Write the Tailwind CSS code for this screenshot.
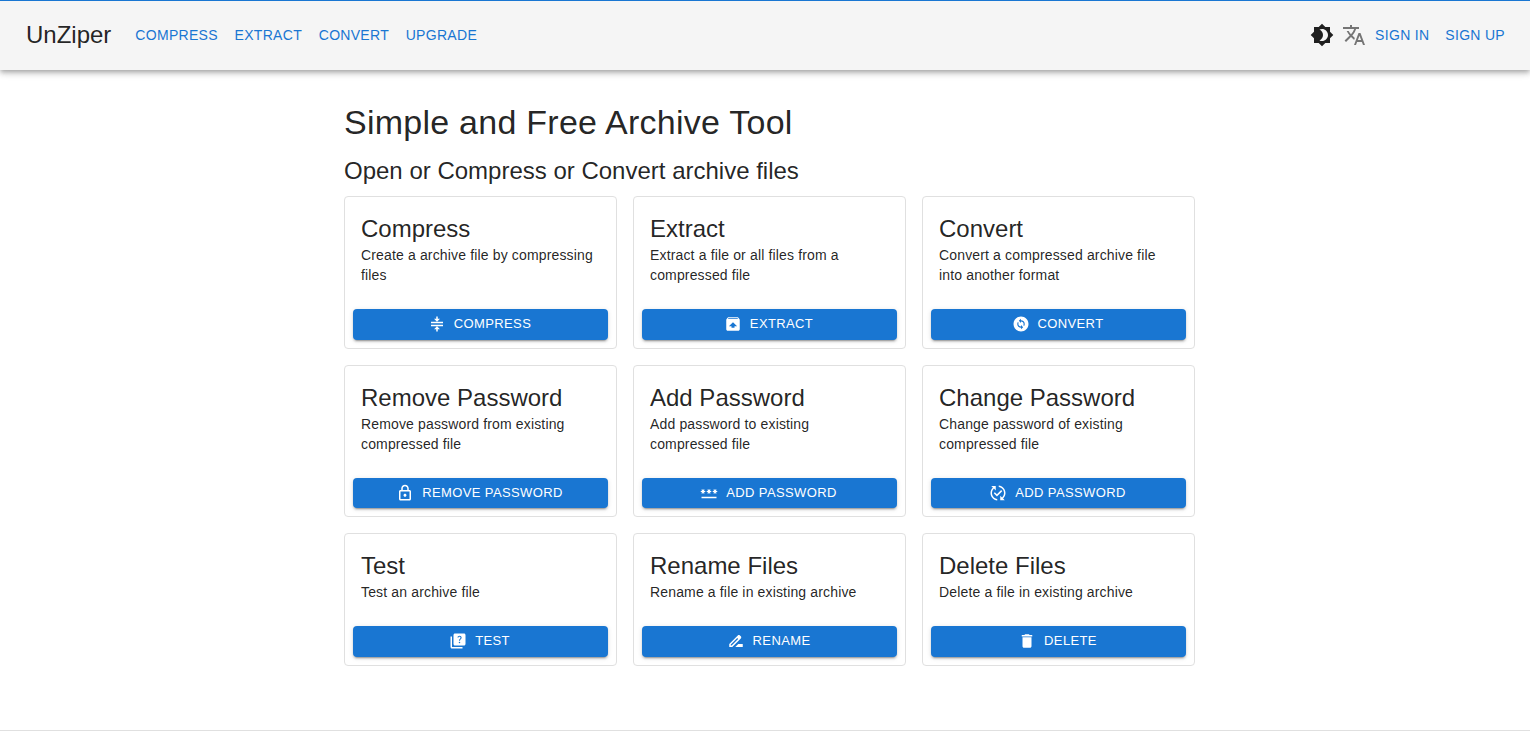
<!DOCTYPE html>
<html lang="en">
<head>
<meta charset="utf-8">
<title>UnZiper</title>
<script src="https://cdn.jsdelivr.net/npm/@tailwindcss/browser@4"></script>
</head>
<body class="h-screen overflow-hidden bg-white font-['Liberation_Sans',Arial,sans-serif] text-black/87 flex flex-col">
<header class="h-[69px] shrink-0 box-content bg-[#f5f5f5] border-t border-[#1976d2] shadow-[0_2px_4px_-1px_rgba(0,0,0,0.2),0_4px_5px_0_rgba(0,0,0,0.14),0_1px_10px_0_rgba(0,0,0,0.12)] flex items-center pl-[26px] pr-[25px] pb-0 relative z-10">
  <div class="flex items-center w-full h-full pb-[2px]">
  <div class="text-2xl leading-8 mr-4">UnZiper</div>
  <nav class="flex items-center gap-[0.7px] text-sm tracking-[0.3px] text-[#1976d2] leading-[26px]">
    <a class="px-2 py-1.5">COMPRESS</a>
    <a class="px-2 py-1.5">EXTRACT</a>
    <a class="px-2 py-1.5">CONVERT</a>
    <a class="px-2 py-1.5">UPGRADE</a>
  </nav>
  <div class="ml-auto flex items-center text-sm tracking-[0.3px] text-[#1976d2] leading-[26px]">
    <svg class="w-6 h-6 fill-[#1f1f1f]" viewBox="0 0 24 24"><path d="M20 8.69V4h-4.69L12 .69 8.69 4H4v4.69L.69 12 4 15.31V20h4.69L12 23.31 15.31 20H20v-4.69L23.31 12 20 8.69zM12 18c-.89 0-1.74-.2-2.5-.55C11.56 16.5 13 14.42 13 12s-1.44-4.5-3.5-5.45C10.26 6.2 11.11 6 12 6c3.31 0 6 2.69 6 6s-2.69 6-6 6z"/></svg>
    <svg class="w-6 h-6 ml-2 fill-[#757575]" viewBox="0 0 24 24"><path d="M12.87 15.07l-2.54-2.51.03-.03c1.74-1.94 2.98-4.17 3.71-6.53H17V4h-7V2H8v2H1v1.99h11.17C11.5 7.92 10.44 9.75 9 11.35 8.07 10.32 7.3 9.19 6.69 8h-2c.73 1.63 1.73 3.17 2.98 4.56l-5.09 5.02L4 19l5-5 3.11 3.11.76-2.04zM18.5 10h-2L12 22h2l1.12-3h4.75L21 22h2l-4.5-12zm-2.62 7l1.62-4.33L19.12 17h-3.24z"/></svg>
    <a class="ml-[9px]">SIGN IN</a>
    <a class="ml-4">SIGN UP</a>
  </div>
  </div>
</header>
<main class="flex-1 w-[851px] ml-[344px] pt-[31px]">
  <h1 class="text-[34px] leading-[42px] tracking-[0.25px]">Simple and Free Archive Tool</h1>
  <h2 class="text-2xl leading-8 mt-3 mb-[9px]">Open or Compress or Convert archive files</h2>
  <div class="grid grid-cols-3 gap-4">

    <section class="border border-[#e0e0e0] rounded flex flex-col">
      <div class="p-4 flex-1"><h3 class="text-2xl leading-8">Compress</h3><p class="text-sm leading-5 tracking-[0.15px]">Create a archive file by compressing files</p></div>
      <div class="p-2"><button class="w-full h-[30.5px] rounded bg-[#1976d2] text-white text-[13px] tracking-[0.37px] flex items-center justify-center shadow-[0_3px_1px_-2px_rgba(0,0,0,0.2),0_2px_2px_0_rgba(0,0,0,0.14),0_1px_5px_0_rgba(0,0,0,0.12)]"><svg class="w-[18px] h-[18px] mr-2 -ml-0.5 fill-white" viewBox="0 0 24 24"><path d="M4 9h16v2H4zM4 13h16v2H4zM13 2v3h3l-4 4-4-4h3V2zM11 22v-3H8l4-4 4 4h-3v3z"/></svg><span class="pb-[2px]">COMPRESS</span></button></div>
    </section>

    <section class="border border-[#e0e0e0] rounded flex flex-col">
      <div class="p-4 flex-1"><h3 class="text-2xl leading-8">Extract</h3><p class="text-sm leading-5 tracking-[0.15px]">Extract a file or all files from a compressed file</p></div>
      <div class="p-2"><button class="w-full h-[30.5px] rounded bg-[#1976d2] text-white text-[13px] tracking-[0.37px] flex items-center justify-center shadow-[0_3px_1px_-2px_rgba(0,0,0,0.2),0_2px_2px_0_rgba(0,0,0,0.14),0_1px_5px_0_rgba(0,0,0,0.12)]"><svg class="w-[18px] h-[18px] mr-2 -ml-0.5 fill-white" viewBox="0 0 24 24"><path d="M20.55 5.22l-1.39-1.68C18.88 3.21 18.47 3 18 3H6c-.47 0-.88.21-1.15.55L3.46 5.22C3.17 5.57 3 6.01 3 6.5V19c0 1.1.89 2 2 2h14c1.1 0 2-.9 2-2V6.5c0-.49-.17-.93-.45-1.28zM12 9.5l5.5 5.5H14v2h-4v-2H6.5L12 9.5zM5.12 5l.82-1h12l.93 1H5.12z"/></svg><span class="pb-[2px]">EXTRACT</span></button></div>
    </section>

    <section class="border border-[#e0e0e0] rounded flex flex-col">
      <div class="p-4 flex-1"><h3 class="text-2xl leading-8">Convert</h3><p class="text-sm leading-5 tracking-[0.15px]">Convert a compressed archive file into another format</p></div>
      <div class="p-2"><button class="w-full h-[30.5px] rounded bg-[#1976d2] text-white text-[13px] tracking-[0.37px] flex items-center justify-center shadow-[0_3px_1px_-2px_rgba(0,0,0,0.2),0_2px_2px_0_rgba(0,0,0,0.14),0_1px_5px_0_rgba(0,0,0,0.12)]"><svg class="w-[18px] h-[18px] mr-2 -ml-0.5 fill-white" viewBox="0 0 24 24"><path d="M12 2C6.48 2 2 6.48 2 12c0 5.52 4.48 10 10 10s10-4.48 10-10C22 6.48 17.52 2 12 2zm.06 17v-2.01H12c-1.28 0-2.56-.49-3.54-1.46-1.71-1.71-1.92-4.35-.64-6.29l1.1 1.1c-.71 1.33-.53 3.01.59 4.13.7.7 1.62 1.03 2.54 1.01v-2.14l2.83 2.83L12.06 19zm4.11-4.24l-1.1-1.1c.71-1.33.53-3.01-.59-4.13C13.79 8.84 12.9 8.5 12 8.5h-.06v2.15L9.11 7.83 11.94 5v2.02c1.3-.02 2.61.45 3.6 1.45 1.7 1.71 1.91 4.34.63 6.29z"/></svg><span class="pb-[2px]">CONVERT</span></button></div>
    </section>

    <section class="border border-[#e0e0e0] rounded flex flex-col">
      <div class="p-4 flex-1"><h3 class="text-2xl leading-8">Remove Password</h3><p class="text-sm leading-5 tracking-[0.15px]">Remove password from existing compressed file</p></div>
      <div class="p-2"><button class="w-full h-[30.5px] rounded bg-[#1976d2] text-white text-[13px] tracking-[0.37px] flex items-center justify-center shadow-[0_3px_1px_-2px_rgba(0,0,0,0.2),0_2px_2px_0_rgba(0,0,0,0.14),0_1px_5px_0_rgba(0,0,0,0.12)]"><svg class="w-[18px] h-[18px] mr-2 -ml-0.5 fill-white" viewBox="0 0 24 24"><path d="M18 8h-1V6c0-2.76-2.24-5-5-5S7 3.24 7 6v2H6c-1.1 0-2 .9-2 2v10c0 1.1.9 2 2 2h12c1.1 0 2-.9 2-2V10c0-1.1-.9-2-2-2zM9 6c0-1.66 1.34-3 3-3s3 1.34 3 3v2H9V6zm9 14H6V10h12v10zm-6-3c1.1 0 2-.9 2-2s-.9-2-2-2-2 .9-2 2 .9 2 2 2z"/></svg><span class="pb-[1px]">REMOVE PASSWORD</span></button></div>
    </section>

    <section class="border border-[#e0e0e0] rounded flex flex-col">
      <div class="p-4 flex-1"><h3 class="text-2xl leading-8">Add Password</h3><p class="text-sm leading-5 tracking-[0.15px]">Add password to existing compressed file</p></div>
      <div class="p-2"><button class="w-full h-[30.5px] rounded bg-[#1976d2] text-white text-[13px] tracking-[0.37px] flex items-center justify-center shadow-[0_3px_1px_-2px_rgba(0,0,0,0.2),0_2px_2px_0_rgba(0,0,0,0.14),0_1px_5px_0_rgba(0,0,0,0.12)]"><svg class="w-[18px] h-[18px] mr-2 -ml-0.5 fill-white" viewBox="0 0 24 24"><path d="M2 17h20v2H2v-2zm1.15-4.05L4 11.47l.85 1.48 1.3-.75-.85-1.48H7v-1.5H5.3l.85-1.47L4.85 7 4 8.47 3.15 7l-1.3.75.85 1.47H1v1.5h1.7l-.85 1.48 1.3.75zm6.7-.75l1.3.75.85-1.48.85 1.48 1.3-.75-.85-1.48H15v-1.5h-1.7l.85-1.47-1.3-.75L12 8.47 11.15 7l-1.3.75.85 1.47H9v1.5h1.7l-.85 1.48zM23 9.22h-1.7l.85-1.47-1.3-.75L20 8.47 19.15 7l-1.3.75.85 1.47H17v1.5h1.7l-.85 1.48 1.3.75.85-1.48.85 1.48 1.3-.75-.85-1.48H23v-1.5z"/></svg><span class="pb-[1px]">ADD PASSWORD</span></button></div>
    </section>

    <section class="border border-[#e0e0e0] rounded flex flex-col">
      <div class="p-4 flex-1"><h3 class="text-2xl leading-8">Change Password</h3><p class="text-sm leading-5 tracking-[0.15px]">Change password of existing compressed file</p></div>
      <div class="p-2"><button class="w-full h-[30.5px] rounded bg-[#1976d2] text-white text-[13px] tracking-[0.37px] flex items-center justify-center shadow-[0_3px_1px_-2px_rgba(0,0,0,0.2),0_2px_2px_0_rgba(0,0,0,0.14),0_1px_5px_0_rgba(0,0,0,0.12)]"><svg class="w-[18px] h-[18px] mr-2 -ml-0.5 fill-white" viewBox="0 0 24 24"><path d="M17.66 9.53l-7.07 7.07-4.24-4.24 1.41-1.41 2.83 2.83 5.66-5.66 1.41 1.41zM4 12c0-2.33 1.02-4.42 2.62-5.88L9 8.5v-6H3l2.2 2.2C3.24 6.52 2 9.11 2 12c0 5.19 3.95 9.45 9 9.95v-2.02c-3.94-.49-7-3.86-7-7.93zm18 0c0-5.19-3.95-9.45-9-9.95v2.02c3.94.49 7 3.86 7 7.93 0 2.33-1.02 4.42-2.62 5.88L15 15.5v6h6l-2.2-2.2c1.96-1.82 3.2-4.41 3.2-7.3z"/></svg><span class="pb-[1px]">ADD PASSWORD</span></button></div>
    </section>

    <section class="border border-[#e0e0e0] rounded flex flex-col">
      <div class="p-4 flex-1"><h3 class="text-2xl leading-8">Test</h3><p class="text-sm leading-5 tracking-[0.15px]">Test an archive file</p></div>
      <div class="p-2"><button class="w-full h-[30.5px] rounded bg-[#1976d2] text-white text-[13px] tracking-[0.37px] flex items-center justify-center shadow-[0_3px_1px_-2px_rgba(0,0,0,0.2),0_2px_2px_0_rgba(0,0,0,0.14),0_1px_5px_0_rgba(0,0,0,0.12)]"><svg class="w-[18px] h-[18px] mr-2 -ml-0.5 fill-white" viewBox="0 0 24 24"><path d="M4 6H2v14c0 1.1.9 2 2 2h14v-2H4V6zm16-4H8c-1.1 0-2 .9-2 2v12c0 1.1.9 2 2 2h12c1.1 0 2-.9 2-2V4c0-1.1-.9-2-2-2zm-5.99 13c-.59 0-1.05-.47-1.05-1.05 0-.59.47-1.04 1.05-1.04.59 0 1.04.45 1.04 1.04-.01.58-.45 1.05-1.04 1.05zm2.5-6.17c-.63.93-1.23 1.21-1.56 1.81-.13.24-.18.4-.18 1.18h-1.52c0-.41-.06-1.08.26-1.65.41-.73 1.18-1.16 1.63-1.8.48-.68.21-1.94-1.14-1.94-.88 0-1.32.67-1.5 1.23l-1.37-.57C11.51 5.96 12.52 5 13.99 5c1.23 0 2.08.56 2.51 1.26.37.61.58 1.73.01 2.57z"/></svg><span class="pb-[2px]">TEST</span></button></div>
    </section>

    <section class="border border-[#e0e0e0] rounded flex flex-col">
      <div class="p-4 flex-1"><h3 class="text-2xl leading-8">Rename Files</h3><p class="text-sm leading-5 tracking-[0.15px]">Rename a file in existing archive</p></div>
      <div class="p-2"><button class="w-full h-[30.5px] rounded bg-[#1976d2] text-white text-[13px] tracking-[0.37px] flex items-center justify-center shadow-[0_3px_1px_-2px_rgba(0,0,0,0.2),0_2px_2px_0_rgba(0,0,0,0.14),0_1px_5px_0_rgba(0,0,0,0.12)]"><svg class="w-[18px] h-[18px] mr-2 -ml-0.5 fill-white" viewBox="0 0 24 24"><path d="M18.41 5.8L17.2 4.59c-.78-.78-2.05-.78-2.83 0l-2.68 2.68L3 15.96V20h4.04l8.74-8.74 2.63-2.63c.79-.78.79-2.05 0-2.83zM6.21 18H5v-1.21l8.66-8.66 1.21 1.21L6.21 18zM11 20l4-4h6v4H11z"/></svg><span class="pb-[2px]">RENAME</span></button></div>
    </section>

    <section class="border border-[#e0e0e0] rounded flex flex-col">
      <div class="p-4 flex-1"><h3 class="text-2xl leading-8">Delete Files</h3><p class="text-sm leading-5 tracking-[0.15px]">Delete a file in existing archive</p></div>
      <div class="p-2"><button class="w-full h-[30.5px] rounded bg-[#1976d2] text-white text-[13px] tracking-[0.37px] flex items-center justify-center shadow-[0_3px_1px_-2px_rgba(0,0,0,0.2),0_2px_2px_0_rgba(0,0,0,0.14),0_1px_5px_0_rgba(0,0,0,0.12)]"><svg class="w-[18px] h-[18px] mr-2 -ml-0.5 fill-white" viewBox="0 0 24 24"><path d="M6 19c0 1.1.9 2 2 2h8c1.1 0 2-.9 2-2V7H6v12zM19 4h-3.5l-1-1h-5l-1 1H5v2h14V4z"/></svg><span class="pb-[2px]">DELETE</span></button></div>
    </section>
  </div>
</main>
<footer class="h-px shrink-0 bg-[#e0e0e0]"></footer>
</body>
</html>
